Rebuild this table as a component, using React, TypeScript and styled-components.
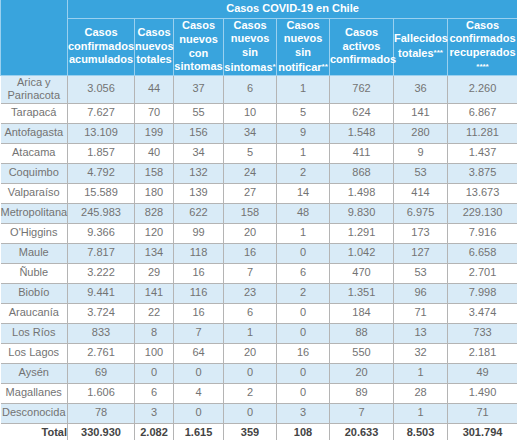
import React from 'react'
import styled, { createGlobalStyle } from 'styled-components'

const GlobalStyle = createGlobalStyle`
  body {
    margin: 0;
    background: #fff;
    font-family: 'Liberation Sans', Arial, sans-serif;
  }
`

const Table = styled.table`
  width: 517px;
  table-layout: fixed;
  border-collapse: collapse;
  font-size: 11px;
  font-family: 'Liberation Sans', Arial, sans-serif;
`

const HeadCell = styled.th`
  background: #39a4dd;
  color: #fff;
  font-weight: bold;
  line-height: 13.7px;
  padding: 0;
  text-align: center;
  vertical-align: middle;
  border: 1px solid #9ad0ef;
  border-top: none;
`

const Note = styled.span`
  font-size: 8px;
  vertical-align: 2px;
`

const TitleRow = styled.tr`
  height: 18px;
`

const LabelRow = styled.tr`
  height: 57px;
`

const BodyRow = styled.tr<{ $shaded: boolean; $tall?: boolean }>`
  height: ${({ $tall }) => ($tall ? '28px' : '20px')};
  background: ${({ $shaded }) => ($shaded ? '#d9ebf7' : '#fff')};
`

const Cell = styled.td<{ $total?: boolean; $right?: boolean }>`
  padding: 0;
  color: ${({ $total }) => ($total ? '#444' : '#737373')};
  font-weight: ${({ $total }) => ($total ? 'bold' : 'normal')};
  text-align: ${({ $right }) => ($right ? 'right' : 'center')};
  line-height: 13.5px;
  vertical-align: middle;
  border: 1px solid #b4b4b4;
  border-left: none;
`

const widths = [67, 67, 39, 50, 53, 53, 64, 54, 70]

const labels: [string, string?][][] = [
  [['Casos'], ['confirmados'], ['acumulados']],
  [['Casos'], ['nuevos'], ['totales']],
  [['Casos'], ['nuevos'], ['con'], ['sintomas']],
  [['Casos'], ['nuevos'], ['sin'], ['sintomas', '*']],
  [['Casos'], ['nuevos'], ['sin'], ['notificar', '**']],
  [['Casos'], ['activos'], ['confirmados']],
  [['Fallecidos'], ['totales', '***']],
  [['Casos'], ['confirmados'], ['recuperados'], ['', '****']],
]

const rows: [string, ...string[]][] = [
  ['Arica y Parinacota', '3.056', '44', '37', '6', '1', '762', '36', '2.260'],
  ['Tarapacá', '7.627', '70', '55', '10', '5', '624', '141', '6.867'],
  ['Antofagasta', '13.109', '199', '156', '34', '9', '1.548', '280', '11.281'],
  ['Atacama', '1.857', '40', '34', '5', '1', '411', '9', '1.437'],
  ['Coquimbo', '4.792', '158', '132', '24', '2', '868', '53', '3.875'],
  ['Valparaíso', '15.589', '180', '139', '27', '14', '1.498', '414', '13.673'],
  ['Metropolitana', '245.983', '828', '622', '158', '48', '9.830', '6.975', '229.130'],
  ["O'Higgins", '9.366', '120', '99', '20', '1', '1.291', '173', '7.916'],
  ['Maule', '7.817', '134', '118', '16', '0', '1.042', '127', '6.658'],
  ['Ñuble', '3.222', '29', '16', '7', '6', '470', '53', '2.701'],
  ['Biobío', '9.441', '141', '116', '23', '2', '1.351', '96', '7.998'],
  ['Araucanía', '3.724', '22', '16', '6', '0', '184', '71', '3.474'],
  ['Los Ríos', '833', '8', '7', '1', '0', '88', '13', '733'],
  ['Los Lagos', '2.761', '100', '64', '20', '16', '550', '32', '2.181'],
  ['Aysén', '69', '0', '0', '0', '0', '20', '1', '49'],
  ['Magallanes', '1.606', '6', '4', '2', '0', '89', '28', '1.490'],
  ['Desconocida', '78', '3', '0', '0', '3', '7', '1', '71'],
]

const total = ['330.930', '2.082', '1.615', '359', '108', '20.633', '8.503', '301.794']

const App: React.FC = () => {
  return (
    <>
      <GlobalStyle />
      <Table>
        <colgroup>
          {widths.map((w, i) => (
            <col key={i} style={{ width: w }} />
          ))}
        </colgroup>
        <thead>
          <TitleRow>
            <HeadCell rowSpan={2} />
            <HeadCell colSpan={8}>Casos COVID-19 en Chile</HeadCell>
          </TitleRow>
          <LabelRow>
            {labels.map((lines, i) => (
              <HeadCell key={i}>
                {lines.map(([text, note], j) => (
                  <React.Fragment key={j}>
                    {j > 0 && <br />}
                    {text}
                    {note && <Note>{note}</Note>}
                  </React.Fragment>
                ))}
              </HeadCell>
            ))}
          </LabelRow>
        </thead>
        <tbody>
          {rows.map(([region, ...values], i) => (
            <BodyRow key={region} $shaded={i % 2 === 0} $tall={i === 0}>
              <Cell>{region}</Cell>
              {values.map((v, j) => (
                <Cell key={j}>{v}</Cell>
              ))}
            </BodyRow>
          ))}
          <BodyRow $shaded={false}>
            <Cell $total $right>
              Total
            </Cell>
            {total.map((v, j) => (
              <Cell key={j} $total>
                {v}
              </Cell>
            ))}
          </BodyRow>
        </tbody>
      </Table>
    </>
  )
}

export default App
